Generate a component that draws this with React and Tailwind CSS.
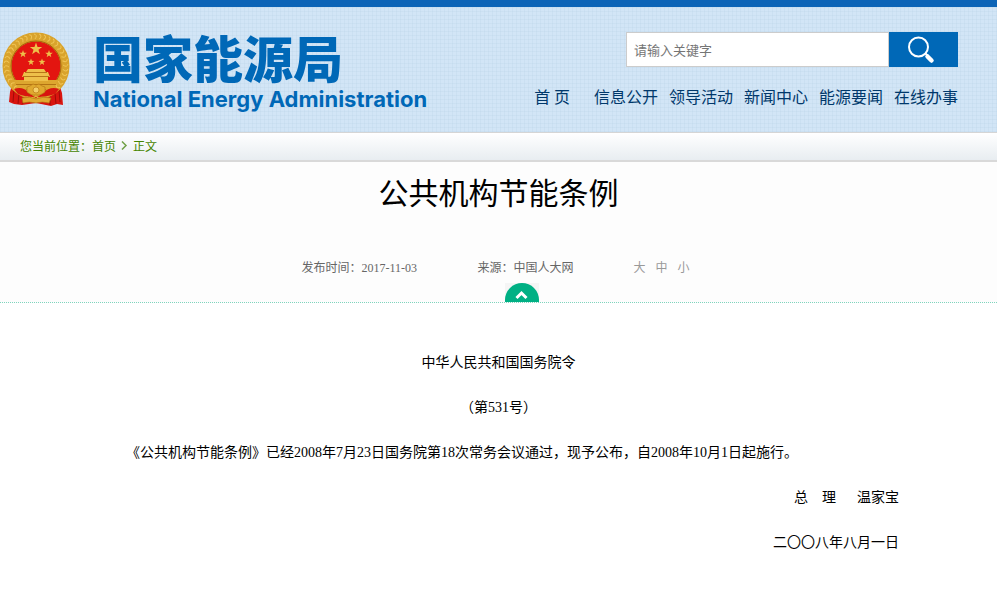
import React from "react";

const NAV = ["信息公开", "领导活动", "新闻中心", "能源要闻", "在线办事"];

const WREATH = Array.from({ length: 40 }, (_, i) => i * 9);

const STAR = "M0-10 2.4-3.2 9.5-3.1 3.8 1.2 5.9 8.1 0 4-5.9 8.1-3.8 1.2-9.5-3.1-2.4-3.2Z";

function Emblem() {
  return (
    <svg viewBox="0 0 70 76" className="h-[76px] w-[70px] shrink-0" aria-hidden="true">
      <path d="M11 53 9 60 8 70 13 72 21 73 35 71 50 74 56 72 62 73 61 61 58 52Z" fill="#d9150f" />
      <path d="M13 58 12 70M18 61 17 72M22 64v8M49 64v9M54 61l1 11M58 58l1 12" stroke="#9f0b08" strokeWidth="1" />
      <circle cx="35" cy="34" r="29" fill="#e31510" stroke="#d9a32c" strokeWidth="9" />
      <g fill="none" stroke="#f0c555" strokeWidth="1">
        {WREATH.map((a) => (
          <path key={a} d="M33 2Q37 3 34 7" transform={`rotate(${a} 35 34)`} />
        ))}
      </g>
      <circle cx="35" cy="34" r="25" fill="none" stroke="#a8660c" strokeWidth="1" />
      <path d="M13 48h44q-2 6-6 9H19q-4-3-6-9Z" fill="#dda62f" />
      <g fill="#eec04a">
        <path d={STAR} transform="translate(35 17) scale(.65)" />
        <path d={STAR} transform="translate(22 22) scale(.4)" />
        <path d={STAR} transform="translate(48 22) scale(.4)" />
        <path d={STAR} transform="translate(30 30) scale(.36)" />
        <path d={STAR} transform="translate(41 30) scale(.36)" />
        <path d="M27 37h16l2 3H25ZM23 40h24l2 5H21ZM23 45h24v4H23Z" />
      </g>
      <path d="M24 40.500h22M22 44.500h26M15 52.500h40" stroke="#a8660c" strokeWidth=".8" />
      <path d="M13 57Q22 54 28 61L35 66 42 61Q49 54 58 57L54 62Q46 65 35 65 24 65 17 62Z" fill="#d8150f" />
      <g fill="#e0a92f" stroke="#b87913" strokeWidth=".7">
        <path d="M29 54l3-2 3 1 3-1 3 2 3 1v5l-3 2-3 1h-6l-3-1-3-2v-5Z" />
        <circle cx="35" cy="58" r="3" fill="#f5cf68" />
        <path d="M21 66Q29 64 35 67 42 64 50 66L48 71Q41 69 35 71 28 69 22 71Z" />
      </g>
    </svg>
  );
}

function SearchIcon() {
  return (
    <svg viewBox="0 0 28 28" className="h-7 w-7" fill="none" stroke="#fff" aria-hidden="true">
      <circle cx="10.500" cy="11" r="9.500" strokeWidth="2" />
      <path d="M17 17l3 3" strokeWidth="2" />
      <path d="M19.500 20.500l4 4" strokeWidth="4.500" strokeLinecap="round" />
    </svg>
  );
}

function Header() {
  return (
    <header className="flex justify-between border-t-[7px] border-b border-t-[#0c64b7] border-b-[#d5d5d5] bg-[#d2e5f6] bg-[linear-gradient(#b8d0e640_1px,transparent_1px),linear-gradient(90deg,#b8d0e640_1px,transparent_1px)] bg-size-[4px_4px] pr-[39px] pl-px">
      <a href="#" className="flex items-start text-[#0068b7]">
        <span className="pt-[25px]">
          <Emblem />
        </span>
        <span className="ml-[22px] flex flex-col pt-[22px]">
          <span className="text-[50px] leading-[54px] font-black">国家能源局</span>
          <span className="font-['Inter',sans-serif] text-[22px] leading-8 font-bold">
            National Energy Administration
          </span>
        </span>
      </a>
      <div className="flex flex-col items-end pt-[25px] pb-6">
        <form className="flex" onSubmit={(e) => e.preventDefault()}>
          <input
            type="text"
            aria-label="请输入关键字"
            placeholder="请输入关键字"
            className="h-[35px] w-[263px] border border-[#ccc] bg-white px-[7px] text-[13px] text-[#333] outline-none placeholder:text-[#757575]"
          />
          <button type="submit" aria-label="搜索" className="flex h-[35px] w-[69px] items-center justify-center bg-[#0068b7] pr-1">
            <SearchIcon />
          </button>
        </form>
        <nav className="mt-[17px] flex gap-[11px] text-base leading-6 text-[#00386b]">
          <a href="#" className="mr-[13px]">首 页</a>
          {NAV.map((item) => (
            <a key={item} href="#">{item}</a>
          ))}
        </nav>
      </div>
    </header>
  );
}

export default function App() {
  return (
    <div className="min-h-screen bg-white font-['Noto_Sans_CJK_SC',sans-serif] text-black">
      <Header />
      <div className="flex h-[29px] items-center gap-[5px] border-b-2 border-[#d9d9d9] bg-linear-to-b from-white to-[#e8edf1] pb-0.5 pl-5 text-xs text-[#458500]">
        <span>您当前位置：<a href="#">首页</a></span>
        <svg viewBox="0 0 7 9" className="h-[9px] w-[7px]" fill="none" stroke="#6fa046" strokeWidth="1.500" aria-hidden="true">
          <path d="M1 .5l4 4-4 4" />
        </svg>
        <span>正文</span>
      </div>
      <main>
        <div className="flex flex-col items-center border-b border-dotted border-[#7fd5bd] bg-[#fdfdfd]">
          <h1 className="mt-[7px] text-[30px] leading-11">公共机构节能条例</h1>
          <div className="mt-[45px] flex pr-1.5 font-['Liberation_Serif','Noto_Sans_CJK_SC',serif] text-xs leading-5 text-[#666]">
            <span className="w-30">发布时间：2017-11-03</span>
            <span className="ml-14">来源：中国人大网</span>
            <span className="ml-[60px] flex gap-2.5 text-[#999]">
              <button type="button">大</button>
              <button type="button">中</button>
              <button type="button">小</button>
            </span>
          </div>
          <button type="button" aria-label="收起" className="mt-[5px] ml-[47px] h-[19px] w-[34px] bg-[#f5f5f5]">
            <svg viewBox="0 0 34 19" className="block h-[19px] w-[34px]" aria-hidden="true">
              <path d="M0 19V17A17 17 0 0 1 34 17V19Z" fill="#00b084" />
              <path d="M11.500 15l5-5 5 5" fill="none" stroke="#fff" strokeWidth="3" />
            </svg>
          </button>
        </div>
        <article className="px-[98px] pt-[37px] font-['Liberation_Serif','Noto_Sans_CJK_SC',serif] text-sm leading-[45px]">
          <p className="text-center">中华人民共和国国务院令</p>
          <p className="text-center">（第531号）</p>
          <p className="indent-7">
            《公共机构节能条例》已经2008年7月23日国务院第18次常务会议通过，现予公布，自2008年10月1日起施行。
          </p>
          <p className="flex justify-end">
            <span>总　理</span>
            <span className="ml-[21px]">温家宝</span>
          </p>
          <p className="text-right">二〇〇八年八月一日</p>
        </article>
      </main>
    </div>
  );
}
